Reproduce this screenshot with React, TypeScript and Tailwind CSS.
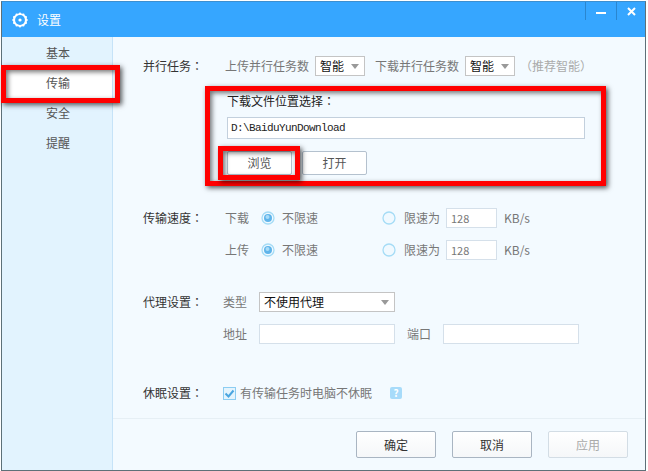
const navItems = ["基本", "传输", "安全", "提醒"];

const labelCls = "text-[12px] text-[#333]";
const subCls = "text-[12px] text-[#777]";
const boxCls = "h-5 border border-[#d5e0ea] bg-white";

// the colon sits in the middle of its cell in the reference, which is how the TC font draws it
const Colon = () => <span className="font-['Noto_Sans_CJK_TC',sans-serif]">：</span>;

const Caret = () => (
  <svg width="8" height="5" viewBox="0 0 8 5" className="shrink-0">
    <path d="M0 0h8L4 5z" fill="#999" />
  </svg>
);

const Select = ({ text, width }: { text: string; width: string }) => (
  <div className={`flex h-5 items-center justify-between border border-[#c4c4c4] bg-white pl-1 pr-[5px] text-[12px] text-[#111] ${width}`}>
    <span>{text}</span>
    <Caret />
  </div>
);

const Radio = ({ on }: { on?: boolean }) => (
  <svg width="14" height="14" viewBox="0 0 14 14" className="shrink-0">
    <circle cx="7" cy="7" r="6" fill="#f0f9ff" stroke="#a5dcf6" strokeWidth="1.3" />
    {on && <circle cx="7" cy="7" r="4" fill="#5fb4ea" />}
    {on && <circle cx="6.5" cy="6" r="2" fill="#a9dcf8" />}
  </svg>
);

const SpeedRow = ({ name, className }: { name: string; className: string }) => (
  <div className={`flex h-5 items-center ${className}`}>
    <span className={`${labelCls} w-[82px]`}>
      {name === "下载" ? (
        <>
          传输速度
          <Colon />
        </>
      ) : (
        ""
      )}
    </span>
    <span className={`${subCls} w-[36px]`}>{name}</span>
    <Radio on />
    <span className={`${subCls} ml-[7px] w-[100px]`}>不限速</span>
    <Radio />
    <span className={`${subCls} ml-2 w-[42px]`}>限速为</span>
    <div className={`${boxCls} flex w-[51px] items-center pl-1 text-[11px] text-[#777]`}>128</div>
    <span className={`${subCls} ml-[7px]`}>KB/s</span>
  </div>
);

const FooterButton = ({ text, disabled }: { text: string; disabled?: boolean }) => (
  <button
    className={`flex h-[27px] w-20 items-center justify-center rounded-[2px] border bg-gradient-to-b from-white to-[#f5f7f9] text-[12px] ${
      disabled ? "border-[#d3dde5] text-[#aaa]" : "border-[#a9b5c2] text-[#333]"
    }`}
  >
    {text}
  </button>
);

const App = () => {
  return (
    <div className="relative h-[471px] w-[648px] overflow-hidden bg-white pl-px pt-px font-['Noto_Sans_CJK_SC',sans-serif]">
      <div className="flex h-[470px] w-[645px] flex-col border border-[#5d7078] border-t-[#3d8fd0]">
        {/* title bar */}
        <div className="flex h-[35px] shrink-0 items-center bg-[#36a6ff] pl-[9px]">
          <svg width="18" height="18" viewBox="0 0 20 20" className="shrink-0">
            <path
              d="M10 1.5 12 3l2.5-.3 1 2.3 2.3 1-.3 2.5L19 10l-1.500 1.500.3 2.500-2.300 1-1 2.300-2.500-.3L10 18.500 8 17l-2.500.3-1-2.300-2.300-1 .3-2.500L1 10l1.500-1.500-.3-2.500 2.300-1 1-2.300L8 3z"
              fill="#fff"
            />
            <circle cx="10" cy="10" r="5.500" fill="#36a6ff" />
            <circle cx="10" cy="10" r="1.800" fill="#fff" />
          </svg>
          <span className="ml-2 text-[12px] text-white">设置</span>
          <div className="ml-auto flex h-full self-start">
            <div className="flex h-[18px] w-[31px] items-center justify-center border-l border-[#2a86cf] pt-[3px]">
              <div className="h-[2px] w-[10px] bg-white" />
            </div>
            <div className="flex h-[18px] w-[29px] items-center justify-center border-l border-[#2a86cf] pl-px">
              <svg width="9" height="9" viewBox="0 0 9 9">
                <path d="M1 1l7 7M8 1L1 8" stroke="#fff" strokeWidth="2" />
              </svg>
            </div>
          </div>
        </div>

        <div className="flex min-h-0 flex-1">
          {/* sidebar */}
          <div className="w-[111px] shrink-0 border-r border-[#c6e3f8] bg-[#e2f3fe] pt-px">
            {navItems.map((item) => (
              <div
                key={item}
                className={`flex h-[30px] items-center pl-11 text-[12px] text-[#555] ${item === "传输" ? "bg-white" : ""}`}
              >
                {item}
              </div>
            ))}
          </div>

          {/* settings */}
          <div className="flex min-w-0 flex-1 flex-col bg-[#f3faff] pl-[30px]">
            <div className="mt-[19px] flex h-5 items-center">
              <span className={`${labelCls} w-[82px]`}>
                并行任务
                <Colon />
              </span>
              <span className={`${subCls} w-[90px]`}>上传并行任务数</span>
              <Select text="智能" width="w-[50px]" />
              <span className={`${subCls} ml-[10px] w-[90px]`}>下载并行任务数</span>
              <Select text="智能" width="w-[50px]" />
              <span className="ml-[5px] text-[12px] text-[#aaa]">（推荐智能）</span>
            </div>

            <div className="ml-[84px] mt-[15px] flex h-5 items-center text-[12px] text-[#222]">
              下载文件位置选择
              <Colon />
            </div>
            <div className="ml-[84px] mt-[6px] flex h-[22px] w-[358px] items-center border border-[#c3d0dd] bg-white pl-[3px] font-['Liberation_Mono',monospace] text-[11px] tracking-[-0.6px] text-[#222]">
              D:\BaiduYunDownload
            </div>
            <div className="ml-[84px] mt-3 flex gap-[10px]">
              <button className="h-6 w-[65px] rounded-[2px] border border-[#b4c1ce] bg-white text-[12px] text-[#555]">浏览</button>
              <button className="h-6 w-[65px] rounded-[2px] border border-[#b4c1ce] bg-white text-[12px] text-[#555]">打开</button>
            </div>

            <SpeedRow name="下载" className="mt-[33px]" />
            <SpeedRow name="上传" className="mt-3" />

            <div className="mt-8 flex h-5 items-center">
              <span className={`${labelCls} w-20`}>
                代理设置
                <Colon />
              </span>
              <span className={`${subCls} w-9`}>类型</span>
              <Select text="不使用代理" width="w-[136px]" />
            </div>
            <div className="mt-3 flex h-5 items-center pl-20">
              <span className={`${subCls} w-9`}>地址</span>
              <div className={`${boxCls} w-[136px]`} />
              <span className={`${subCls} ml-3 w-9`}>端口</span>
              <div className={`${boxCls} w-[136px]`} />
            </div>

            <div className="mt-[39px] flex h-5 items-center">
              <span className={`${labelCls} w-20`}>
                休眠设置
                <Colon />
              </span>
              <svg width="13" height="13" viewBox="0 0 13 13" className="shrink-0">
                <rect x=".5" y=".5" width="12" height="12" fill="#e4f4fd" stroke="#8ccdf2" />
                <path d="M2.500 6.500 5.500 9.500 10.500 3.500" fill="none" stroke="#4aa5e0" strokeWidth="2" />
              </svg>
              <span className={`${subCls} ml-1 w-[150px]`}>有传输任务时电脑不休眠</span>
              <div className="flex h-3 w-3 items-center justify-center rounded-[2px] bg-[#a7dbfa] text-[10px] font-bold leading-none text-white">?</div>
            </div>

            <div className="-ml-[30px] mt-[15px] h-px shrink-0 bg-[#e6eff5]" />
            <div className="mt-3 flex justify-end gap-4 pr-[17px]">
              <FooterButton text="确定" />
              <FooterButton text="取消" />
              <FooterButton text="应用" disabled />
            </div>
          </div>
        </div>
      </div>

      {/* red annotation boxes drawn over the dialog */}
      <div className="absolute left-[1px] top-[65px] h-[38px] w-[119px] border-[5px] border-[#f00] shadow-[2px_2px_5px_rgba(0,0,0,0.65),inset_2px_2px_5px_rgba(0,0,0,0.55)]" />
      <div className="absolute left-[205px] top-[86px] h-[100px] w-[401px] border-[5px] border-[#f00] shadow-[2px_2px_5px_rgba(0,0,0,0.65),inset_2px_2px_5px_rgba(0,0,0,0.55)]" />
      <div className="absolute left-[218px] top-[146px] h-[34px] w-[82px] border-[5px] border-[#f00] shadow-[2px_2px_5px_rgba(0,0,0,0.65),inset_2px_2px_5px_rgba(0,0,0,0.55)]" />
    </div>
  );
};

export default App;
